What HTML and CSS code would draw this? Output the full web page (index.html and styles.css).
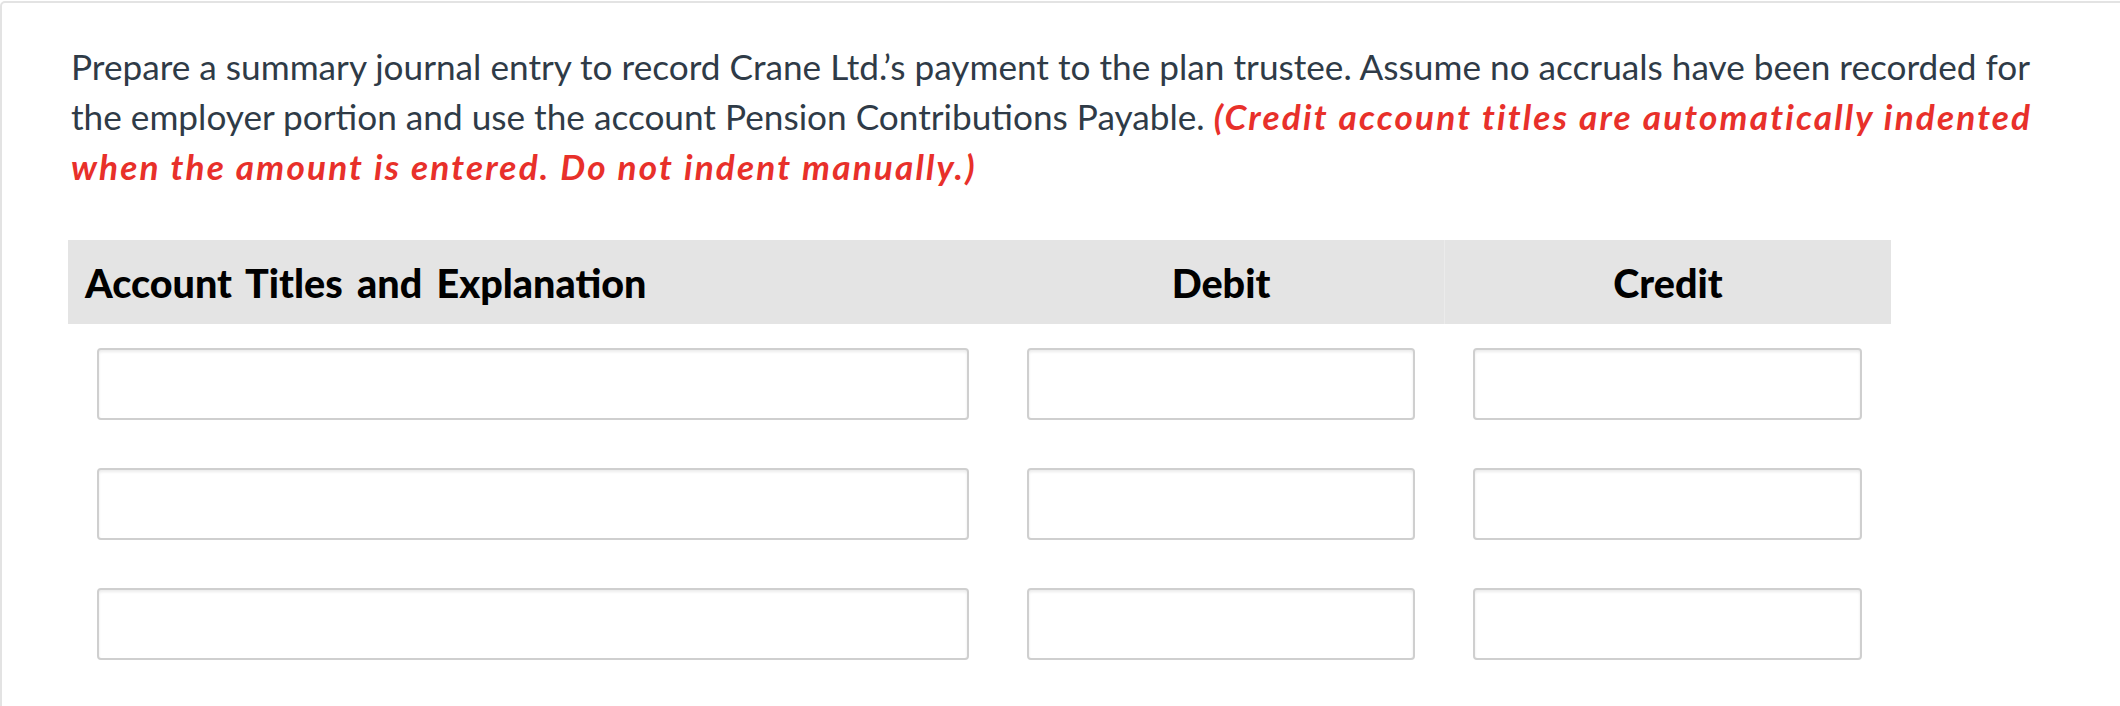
FILE: index.html
```html
<!DOCTYPE html>
<html lang="en">
  <head>
    <title>Journal Entry</title>
    <meta name="viewport" content="width=device-width, initial-scale=1.0">
    <link rel="stylesheet" href="styles.css">
  </head>
  <body>
    <div class="question-card">
      <p class="question-text">
        Prepare a summary journal entry to record Crane Ltd.’s payment to the plan trustee. Assume no accruals have been recorded for the employer portion and use the account Pension Contributions Payable.
        <span class="hint">(Credit account titles are automatically indented when the amount is entered. Do not indent manually.)</span>
      </p>
      <div class="journal">
        <div class="journal-head">
          <div class="col-title">Account Titles and Explanation</div>
          <div class="col-debit">Debit</div>
          <div class="col-credit">Credit</div>
        </div>
        <div class="journal-row">
          <div class="cell"><input type="text" class="entry-box"></div>
          <div class="cell"><input type="text" class="entry-box"></div>
          <div class="cell"><input type="text" class="entry-box"></div>
        </div>
        <div class="journal-row">
          <div class="cell"><input type="text" class="entry-box"></div>
          <div class="cell"><input type="text" class="entry-box"></div>
          <div class="cell"><input type="text" class="entry-box"></div>
        </div>
        <div class="journal-row">
          <div class="cell"><input type="text" class="entry-box"></div>
          <div class="cell"><input type="text" class="entry-box"></div>
          <div class="cell"><input type="text" class="entry-box"></div>
        </div>
      </div>
    </div>
  </body>
</html>
```

FILE: styles.css
```css
body {
  margin: 0;
  overflow: hidden;
  background: #fff;
  font-family: Lato, "Open Sans", sans-serif;
}
.question-card {
  margin-top: 1px;
  margin-right: -20px;
  border: 2px solid #e3e3e3;
  border-radius: 5px;
  padding: 38px 0 0 66px;
  min-height: 800px;
}
.question-text {
  margin: 0;
  padding-left: 3px;
  width: 1990px;
  font-size: 35.2px;
  line-height: 50px;
  color: #2f3b47;
}
.hint {
  color: #e8302a;
  font-style: italic;
  font-weight: bold;
  letter-spacing: 2.15px;
}
.journal {
  margin-top: 49px;
  width: 1823px;
}
.journal-head, .journal-row {
  display: grid;
  grid-template-columns: 930px 446px 447px;
}
.journal-head {
  height: 84px;
  background-color: #e4e4e4;
  align-items: center;
  font-weight: 900;
  font-size: 39.5px;
  color: #000;
}
.col-title {
  padding-left: 17px;
  word-spacing: 5px;
}
.col-debit, .col-credit {
  text-align: center;
}
.col-credit {
  height: 100%;
  display: flex;
  align-items: center;
  justify-content: center;
  border-left: 1px solid #ebebeb;
}
.cell {
  padding: 24px 29px;
}
.entry-box {
  display: block;
  box-sizing: border-box;
  width: 100%;
  height: 72px;
  margin: 0;
  border: 2px solid #cfcfcf;
  border-radius: 4px;
  box-shadow: inset 0 2px 3px rgba(0, 0, 0, 0.08);
  background: #fff;
}
```
